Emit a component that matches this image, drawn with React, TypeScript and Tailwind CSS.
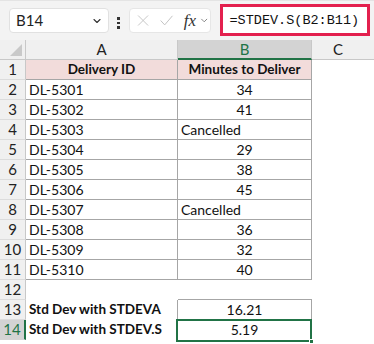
import React from "react";

type Cell = { a?: string; b?: string; bAlign?: "c" | "l"; bold?: boolean; header?: boolean };

const rows: Cell[] = [
  { a: "Delivery ID", b: "Minutes to Deliver", header: true, bold: true },
  { a: "DL-5301", b: "34" },
  { a: "DL-5302", b: "41" },
  { a: "DL-5303", b: "Cancelled", bAlign: "l" },
  { a: "DL-5304", b: "29" },
  { a: "DL-5305", b: "38" },
  { a: "DL-5306", b: "45" },
  { a: "DL-5307", b: "Cancelled", bAlign: "l" },
  { a: "DL-5308", b: "36" },
  { a: "DL-5309", b: "32" },
  { a: "DL-5310", b: "40" },
  {},
  { a: "Std Dev with STDEVA", b: "16.21", bold: true },
  { a: "Std Dev with STDEV.S", b: "5.19", bold: true },
];

export default function App() {
  return (
    <div
      className="w-[374px] h-[344px] overflow-hidden bg-white text-[#111]"
      style={{ fontFamily: "Lato, 'Liberation Sans', sans-serif" }}
    >
      {/* toolbar */}
      <div className="h-[40px] bg-[#f3f3f3] border-t border-[#e4e4e4] flex items-start relative">
        <div className="mt-[7px] ml-[9px] w-[100px] h-[25px] bg-white rounded-[4px] border border-[#e1e1e1] flex items-center justify-between pl-[6px] pr-[5px]">
          <span className="text-[15px] leading-none text-[#222]">B14</span>
          <svg width="12" height="12" viewBox="0 0 24 24" fill="none" stroke="#333" strokeWidth="2.2" strokeLinecap="round" strokeLinejoin="round">
            <path d="m6 9 6 6 6-6" />
          </svg>
        </div>
        <div className="mt-[16px] ml-[8px] flex flex-col gap-[2px]">
          <div className="w-[2.5px] h-[2.5px] bg-[#333]" />
          <div className="w-[2.5px] h-[2.5px] bg-[#333]" />
          <div className="w-[2.5px] h-[2.5px] bg-[#333]" />
        </div>
        <div className="mt-[7px] ml-[9px] w-[82px] h-[25px] bg-white rounded-[4px] border border-[#e6e6e6] flex items-center pl-[6px]">
          <svg width="15" height="15" viewBox="0 0 24 24" fill="none" stroke="#c4c4c4" strokeWidth="1.6" strokeLinecap="round">
            <path d="M4 4 20 20M20 4 4 20" />
          </svg>
          <svg className="ml-[9px]" width="16" height="15" viewBox="0 0 24 24" fill="none" stroke="#c4c4c4" strokeWidth="1.6" strokeLinecap="round" strokeLinejoin="round">
            <path d="M3 12.5 9 19 21 5" />
          </svg>
          <span
            className="ml-[10px] text-[17px] italic leading-none text-[#333]"
            style={{ fontFamily: "'Liberation Serif', serif" }}
          >
            fx
          </span>
          <svg className="ml-[3px]" width="11" height="11" viewBox="0 0 24 24" fill="none" stroke="#777" strokeWidth="2" strokeLinecap="round" strokeLinejoin="round">
            <path d="m6 9 6 6 6-6" />
          </svg>
        </div>
        <div className="mt-[3px] ml-[9px] w-[150px] h-[32px] bg-white border-[3px] border-[#e3204e] flex items-center pl-[7px] pt-[1px]">
          <span
            className="text-[13.5px] leading-none text-[#111]"
            style={{ fontFamily: "'Liberation Mono', monospace" }}
          >
            =STDEV.S(B2:B11)
          </span>
        </div>
      </div>

      {/* column headers */}
      <div className="flex h-[20px] bg-[#f0f0f0] text-[15px] leading-none">
        <div className="w-[26px] h-full border-r border-b border-[#c8c8c8] relative">
          <svg className="absolute right-[3px] bottom-[3px]" width="12" height="12" viewBox="0 0 12 12">
            <path d="M12 0 L12 12 L0 12 Z" fill="#c9c9c9" />
          </svg>
        </div>
        <div className="w-[152px] h-full border-r border-b border-[#c8c8c8] flex items-center justify-center text-[#222]">A</div>
        <div className="w-[134px] h-full bg-[#d3d3d3] border-r border-[#c8c8c8] border-b-2 border-b-[#217346] flex items-center justify-center text-[#217346]">B</div>
        <div className="flex-1 h-full border-b border-[#c8c8c8] flex items-center justify-center text-[#222] pr-[10px]">C</div>
      </div>

      {/* rows */}
      {rows.map((r, i) => {
        const n = i + 1;
        const inTable = n <= 11;
        const sel = n === 14;
        const aBorder = inTable
          ? "border-r border-b border-[#a6a6a6]"
          : n >= 13
          ? "border-r border-[#a6a6a6]"
          : "";
        const bBorder = inTable || n === 12 || n === 13
          ? "border-r border-b border-[#a6a6a6]"
          : "border-r border-[#a6a6a6]";
        const bg = r.header ? "bg-[#f2dcdb]" : "";
        return (
          <div key={n} className="flex h-[20px] leading-none">
            <div
              className={
                "w-[26px] h-full flex items-center justify-center text-[15px] " +
                (sel
                  ? "bg-[#d3d3d3] text-[#217346] border-r-2 border-r-[#217346] border-b border-b-[#d4d4d4]"
                  : "bg-[#f0f0f0] text-[#222] border-r border-[#c8c8c8] border-b border-b-[#dcdcdc]")
              }
            >
              {n}
            </div>
            <div
              className={
                "w-[152px] h-full flex items-center whitespace-nowrap " +
                (r.header ? "justify-center " : "pl-[3px] ") +
                (r.bold ? "font-bold text-[13.5px] " : "text-[14px] ") +
                bg +
                " " +
                (n === 12 ? "" : aBorder)
              }
            >
              {r.a}
            </div>
            <div
              className={
                "w-[134px] h-full flex items-center whitespace-nowrap relative " +
                (r.bAlign === "l" ? "pl-[3px] " : "justify-center ") +
                (r.header ? "font-bold text-[13.5px] " : "text-[14px] ") +
                bg +
                " " +
                (n === 12 ? "border-b border-[#a6a6a6]" : bBorder)
              }
            >
              {r.b}
              {sel && (
                <>
                  <div className="absolute left-[-2px] top-[-1px] right-[-1px] bottom-[-2px] border-2 border-[#217346]" />
                  <div className="absolute right-[-3px] bottom-[-4px] w-[5px] h-[5px] bg-[#217346] border border-white" />
                </>
              )}
            </div>
            <div className="flex-1 h-full" />
          </div>
        );
      })}
    </div>
  );
}
